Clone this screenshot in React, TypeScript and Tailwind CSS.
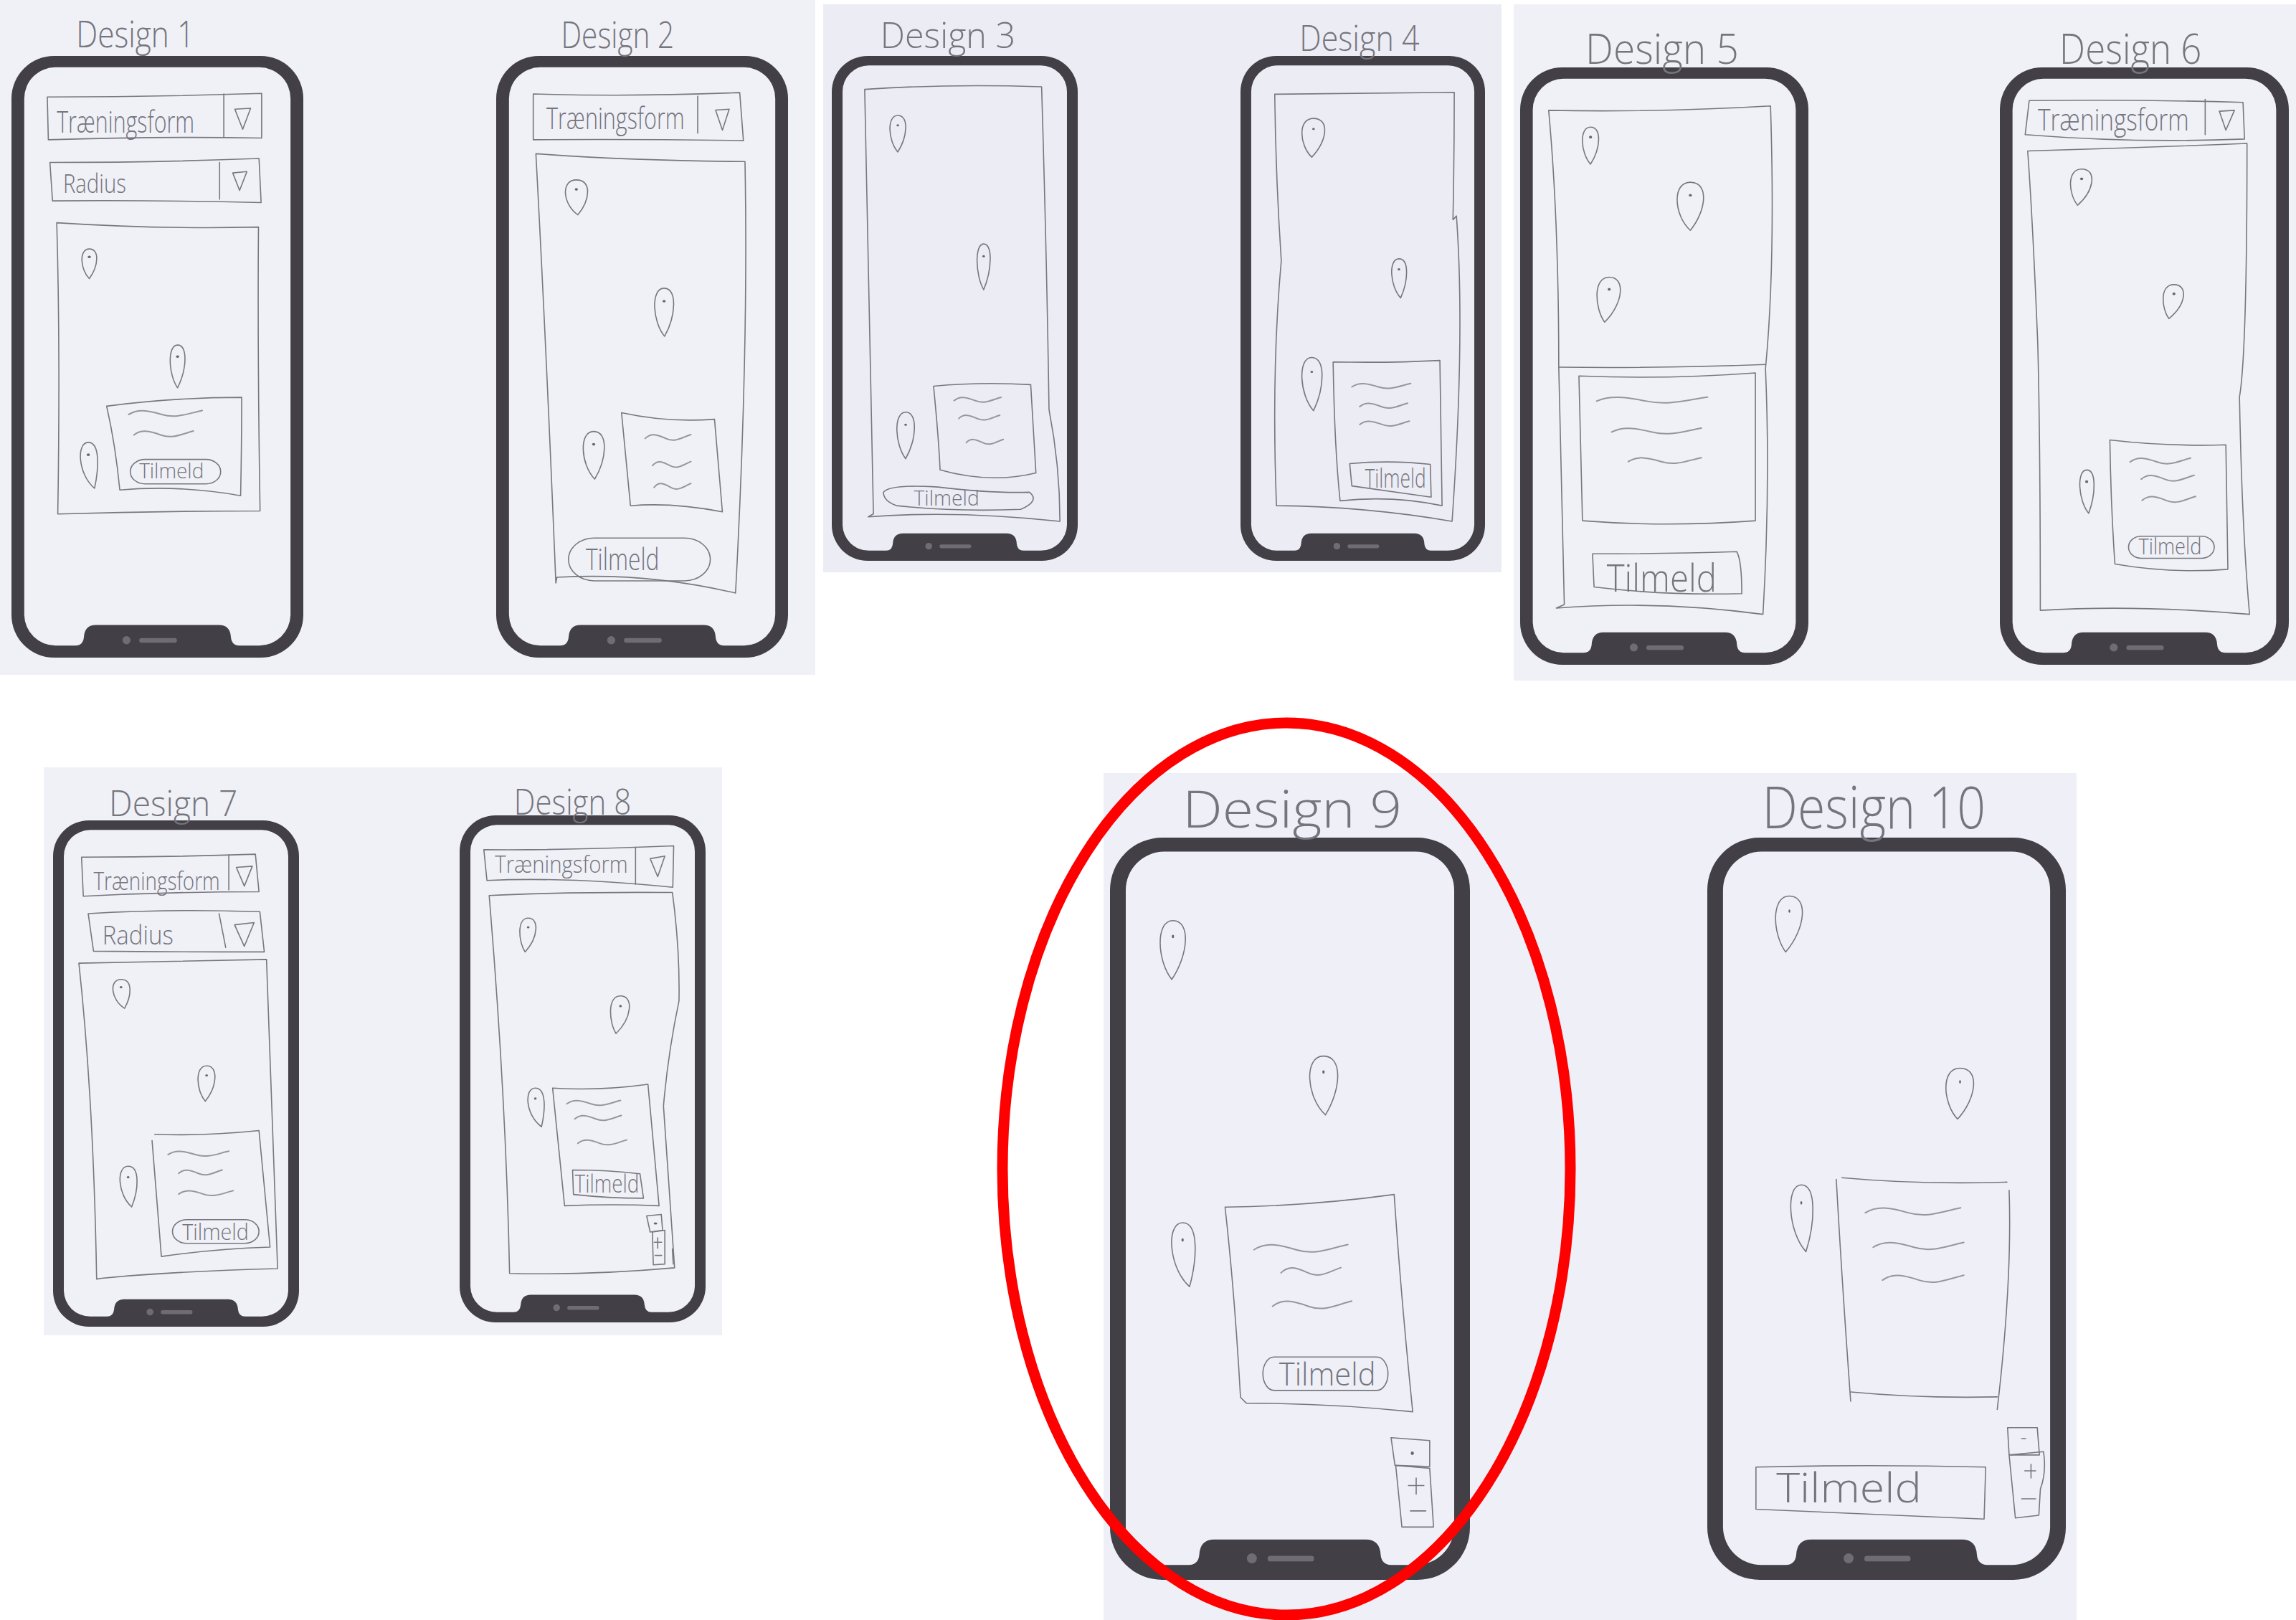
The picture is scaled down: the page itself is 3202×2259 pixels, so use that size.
import React from "react";

const Line = ({ d, light }: { d: string; light?: boolean }) => (
  <path
    d={d}
    fill="none"
    vectorEffect="non-scaling-stroke"
    strokeLinejoin="round"
    strokeLinecap="round"
    className={light ? "stroke-[#96969f] stroke-[2px]" : "stroke-[#77777f] stroke-[1.6px]"}
  />
);

const Wave = ({ x1, x2, y }: { x1: number; x2: number; y: number }) => {
  const w = x2 - x1;
  return (
    <Line
      light
      d={`M${x1} ${y + 4} C${x1 + w * 0.12} ${y - 9} ${x1 + w * 0.25} ${y - 6} ${x1 + w * 0.45} ${y + 4} S${x1 + w * 0.8} ${y + 2} ${x2} ${y - 5}`}
    />
  );
};

const Pin = ({ cx, t, b, w, tip }: { cx: number; t: number; b: number; w: number; tip?: number }) => {
  const h = b - t;
  const tx = tip ?? cx;
  return (
    <g>
      <Line
        d={`M${tx} ${b} C${cx - w * 0.62} ${b - h * 0.3} ${cx - w * 0.72} ${t} ${cx} ${t} C${cx + w * 0.72} ${t} ${cx + w * 0.62} ${b - h * 0.42} ${tx} ${b}`}
      />
      <ellipse cx={cx} cy={t + h * 0.27} rx={3} ry={3} className="fill-[#66666e]" />
    </g>
  );
};

const Pill = ({ x, y, w, h }: { x: number; y: number; w: number; h: number }) => (
  <rect
    x={x}
    y={y}
    width={w}
    height={h}
    rx={h / 2}
    ry={h / 2}
    fill="none"
    vectorEffect="non-scaling-stroke"
    className="stroke-[#77777f] stroke-[1.6px]"
  />
);

const Note = ({
  x,
  y,
  size,
  len,
  children,
}: {
  x: number;
  y: number;
  size: number;
  len: number;
  children: string;
}) => (
  <text
    x={x}
    y={y}
    fontSize={size}
    textLength={len}
    lengthAdjust="spacingAndGlyphs"
    className="fill-[#75757d] font-light font-['Open_Sans']"
  >
    {children}
  </text>
);

const Scan = ({ className, children }: { className: string; children: React.ReactNode }) => (
  <svg viewBox="0 0 1560 1560" preserveAspectRatio="none" className={`absolute ${className}`}>
    {children}
  </svg>
);

const Phone = ({ className }: { className: string }) => (
  <svg viewBox="0 0 411 847" preserveAspectRatio="none" className={`absolute ${className}`}>
    <path
      fillRule="evenodd"
      className="fill-[#423f47]"
      d="M60 0H351A60 60 0 0 1 411 60V787A60 60 0 0 1 351 847H60A60 60 0 0 1 0 787V60A60 60 0 0 1 60 0Z
         M62 16A44 44 0 0 0 18 60V787A44 44 0 0 0 62 830H90Q101 830 102 818Q103 801 119 801H292Q308 801 309 818Q310 830 321 830H349A44 44 0 0 0 393 787V60A44 44 0 0 0 349 16Z"
    />
    <circle cx="162" cy="822.5" r="5.7" className="fill-[#6f6c73]" />
    <rect x="180" y="819.5" width="53" height="6.5" rx="3" className="fill-[#6f6c73]" />
  </svg>
);

export default function App() {
  return (
    <div className="relative w-[3202px] h-[2259px] bg-white overflow-hidden">
      {/* paper sheets */}
      <div className="absolute left-[0px] top-[0px] w-[1137px] h-[941px] bg-[#f0f0f7]" />
      <div className="absolute left-[1148px] top-[6px] w-[946px] h-[792px] bg-[#ececf5]" />
      <div className="absolute left-[2111px] top-[6px] w-[1091px] h-[943px] bg-[#f0f0f7]" />
      <div className="absolute left-[61px] top-[1070px] w-[946px] h-[792px] bg-[#f0f0f7]" />
      <div className="absolute left-[1539px] top-[1078px] w-[1357px] h-[1181px] bg-[#efeff7]" />

      {/* phone frames */}
      <Phone className="left-[16px] top-[78px] w-[407px] h-[839px]" />
      <Phone className="left-[692px] top-[78px] w-[407px] h-[839px]" />
      <Phone className="left-[1160px] top-[78px] w-[343px] h-[704px]" />
      <Phone className="left-[1730px] top-[78px] w-[341px] h-[704px]" />
      <Phone className="left-[2120px] top-[94px] w-[402px] h-[833px]" />
      <Phone className="left-[2789px] top-[94px] w-[403px] h-[833px]" />
      <Phone className="left-[74px] top-[1144px] w-[343px] h-[706px]" />
      <Phone className="left-[641px] top-[1137px] w-[343px] h-[707px]" />
      <Phone className="left-[1548px] top-[1168px] w-[502px] h-[1035px]" />
      <Phone className="left-[2381px] top-[1168px] w-[500px] h-[1035px]" />

      {/* Design 1 and 2 */}
      <Scan className="left-[0px] top-[0px] w-[1143px] h-[950px]">
        <Note x={145} y={108} size={85} len={225}>Design 1</Note>
        <Note x={1068} y={110} size={85} len={215}>Design 2</Note>

        <Line d="M90 222Q290 222 498 214L498 316Q300 312 92 320Z" />
        <Line d="M426 215V315" />
        <Line d="M447 250L477 248L462 296Z" />
        <Note x={108} y={303} size={68} len={262}>Træningsform</Note>
        <Line d="M95 372Q300 372 493 363L497 464Q300 458 100 460Z" />
        <Line d="M418 372V456" />
        <Line d="M443 396L470 393L456 436Z" />
        <Note x={120} y={442} size={60} len={120}>Radius</Note>
        <Line d="M108 510Q300 525 492 520Q490 800 495 1170Q300 1170 110 1177Q115 800 108 510Z" />
        <Pin cx={170} t={570} b={638} w={28} />
        <Pin cx={338} t={790} b={888} w={28} />
        <Pin cx={168} t={1013} b={1118} w={32} tip={180} />
        <Line d="M203 930Q330 910 460 910Q460 1020 458 1135Q340 1110 228 1122Q220 1020 203 930Z" />
        <Wave x1={245} x2={385} y={945} />
        <Wave x1={255} x2={368} y={992} />
        <Pill x={248} y={1052} w={172} h={56} />
        <Note x={265} y={1096} size={48} len={123}>Tilmeld</Note>

        <Line d="M1015 215Q1200 222 1408 212L1415 322Q1200 318 1015 320Z" />
        <Line d="M1328 220V305" />
        <Line d="M1362 252L1388 250L1375 298Z" />
        <Note x={1040} y={296} size={68} len={263}>Træningsform</Note>
        <Line d="M1020 352Q1200 368 1418 370Q1425 800 1400 1358Q1230 1310 1060 1322L1058 1335Q1040 800 1020 352Z" />
        <Pin cx={1097} t={412} b={492} w={42} tip={1100} />
        <Pin cx={1264} t={660} b={770} w={36} tip={1265} />
        <Pin cx={1130} t={988} b={1097} w={40} tip={1132} />
        <Line d="M1183 945Q1270 968 1360 960L1375 1172Q1280 1150 1200 1158Z" />
        <Wave x1={1228} x2={1315} y={1000} />
        <Wave x1={1242} x2={1315} y={1062} />
        <Wave x1={1245} x2={1315} y={1112} />
        <Pill x={1082} y={1232} w={270} h={98} />
        <Note x={1115} y={1306} size={68} len={140}>Tilmeld</Note>
      </Scan>

      {/* Design 3 and 4 */}
      <Scan className="left-[1150px] top-[0px] w-[948px] h-[810px]">
        <Note x={128} y={130} size={95} len={310}>Design 3</Note>
        <Note x={1090} y={137} size={95} len={275}>Design 4</Note>

        <Line d="M92 240Q280 225 498 233Q510 700 515 1100Q540 1250 540 1400Q300 1370 100 1388L112 1380Q100 800 92 240Z" />
        <Pin cx={168} t={310} b={408} w={36} />
        <Pin cx={365} t={655} b={778} w={30} />
        <Pin cx={186} t={1107} b={1232} w={40} />
        <Line d="M250 1037Q360 1025 473 1033L485 1270Q380 1300 265 1262Q262 1180 250 1037Z" />
        <Wave x1={297} x2={405} y={1072} />
        <Wave x1={308} x2={402} y={1120} />
        <Wave x1={325} x2={410} y={1185} />
        <Line d="M135 1322Q150 1300 260 1308Q380 1325 470 1322Q495 1345 450 1368Q300 1375 165 1358Q135 1345 135 1322Z" />
        <Note x={205} y={1358} size={58} len={150}>Tilmeld</Note>

        <Line d="M1033 253Q1240 250 1445 248Q1445 420 1442 590L1450 580Q1470 900 1440 1400Q1240 1360 1037 1358Q1025 1000 1048 700Q1035 470 1033 253Z" />
        <Pin cx={1122} t={318} b={422} w={52} tip={1118} />
        <Pin cx={1318} t={695} b={800} w={34} tip={1322} />
        <Pin cx={1118} t={960} b={1103} w={46} tip={1122} />
        <Line d="M1167 972Q1300 975 1412 968L1417 1358Q1300 1330 1183 1345Q1170 1200 1167 972Z" />
        <Wave x1={1210} x2={1345} y={1035} />
        <Wave x1={1228} x2={1338} y={1088} />
        <Wave x1={1228} x2={1342} y={1136} />
        <Line d="M1205 1245Q1300 1235 1390 1247L1392 1335Q1300 1320 1210 1305Z" />
        <Note x={1240} y={1310} size={72} len={140}>Tilmeld</Note>
      </Scan>

      {/* Design 5 and 6 */}
      <Scan className="left-[2100px] top-[0px] w-[1097px] h-[960px]">
        <Note x={158} y={145} size={95} len={304}>Design 5</Note>
        <Note x={1098} y={145} size={95} len={282}>Design 6</Note>

        <Line d="M85 250Q300 255 525 240Q535 600 515 835Q525 1100 510 1392Q300 1360 100 1378L116 1370Q110 1100 105 830Q105 500 85 250Z" />
        <Line d="M105 832Q300 835 515 826" />
        <Pin cx={168} t={288} b={372} w={32} />
        <Pin cx={366} t={413} b={522} w={52} />
        <Pin cx={205} t={628} b={730} w={46} tip={196} />
        <Line d="M145 852Q320 860 495 845L495 1180Q320 1195 152 1180Z" />
        <Wave x1={180} x2={400} y={905} />
        <Wave x1={210} x2={388} y={975} />
        <Wave x1={243} x2={388} y={1042} />
        <Line d="M172 1255Q320 1255 458 1250Q468 1270 468 1345Q320 1350 175 1330Z" />
        <Note x={200} y={1340} size={88} len={218}>Tilmeld</Note>

        <Line d="M1038 228Q1250 225 1462 232L1465 315Q1250 325 1030 305Z" />
        <Line d="M1387 225V305" />
        <Line d="M1415 252L1445 250L1428 295Z" />
        <Note x={1055} y={296} size={68} len={300}>Træningsform</Note>
        <Line d="M1035 342Q1250 335 1470 325Q1470 800 1455 900Q1460 1200 1475 1392Q1250 1370 1060 1383Q1060 1000 1055 780Q1045 500 1035 342Z" />
        <Pin cx={1142} t={383} b={465} w={42} tip={1134} />
        <Pin cx={1325} t={645} b={722} w={40} tip={1315} />
        <Pin cx={1152} t={1065} b={1163} w={28} tip={1156} />
        <Line d="M1198 997Q1310 1012 1428 1008L1432 1290Q1320 1300 1208 1278Q1200 1150 1198 997Z" />
        <Wave x1={1238} x2={1358} y={1043} />
        <Wave x1={1260} x2={1365} y={1082} />
        <Wave x1={1262} x2={1368} y={1130} />
        <Pill x={1235} y={1215} w={170} h={50} />
        <Note x={1255} y={1256} size={50} len={125}>Tilmeld</Note>
      </Scan>

      {/* Design 7 and 8 */}
      <Scan className="left-[50px] top-[1060px] w-[965px] h-[818px]">
        <Note x={165} y={148} size={95} len={290}>Design 7</Note>
        <Note x={1078} y={145} size={95} len={264}>Design 8</Note>

        <Line d="M103 258Q300 258 495 250L503 350Q300 350 107 362Z" />
        <Line d="M435 252V345" />
        <Line d="M452 285L488 282L470 335Z" />
        <Note x={130} y={345} size={68} len={285}>Træningsform</Note>
        <Line d="M118 408Q300 395 505 403L515 510Q300 510 130 508Z" />
        <Line d="M413 408L428 498" />
        <Line d="M448 438L492 432L470 495Z" />
        <Note x={150} y={490} size={70} len={160}>Radius</Note>
        <Line d="M97 540Q300 535 520 530Q530 900 545 1352Q300 1360 148 1378L137 1380Q130 900 97 540Z" />
        <Pin cx={192} t={583} b={660} w={38} tip={200} />
        <Pin cx={385} t={813} b={907} w={38} tip={382} />
        <Pin cx={208} t={1080} b={1188} w={38} tip={216} />
        <Line d="M268 995Q380 1000 503 985L528 1295Q400 1300 283 1320L262 1012" />
        <Wave x1={298} x2={435} y={1045} />
        <Wave x1={322} x2={420} y={1095} />
        <Wave x1={322} x2={445} y={1150} />
        <Pill x={308} y={1222} w={195} h={63} />
        <Note x={330} y={1276} size={60} len={150}>Tilmeld</Note>

        <Line d="M1010 238Q1200 240 1438 228L1436 338Q1200 310 1017 320Z" />
        <Line d="M1352 232V330" />
        <Line d="M1385 262L1418 255L1402 310Z" />
        <Note x={1035} y={300} size={62} len={300}>Træningsform</Note>
        <Line d="M1022 360Q1200 350 1435 352Q1452 500 1450 640Q1425 780 1415 920Q1425 1100 1440 1350Q1250 1370 1068 1365Q1060 900 1022 360Z" />
        <Pin cx={1110} t={420} b={510} w={36} tip={1103} />
        <Pin cx={1318} t={627} b={727} w={42} tip={1308} />
        <Pin cx={1126} t={872} b={975} w={36} tip={1140} />
        <Line d="M1165 872Q1270 880 1380 862L1405 1185Q1300 1180 1192 1185Z" />
        <Wave x1={1197} x2={1318} y={910} />
        <Wave x1={1215} x2={1320} y={950} />
        <Wave x1={1222} x2={1332} y={1015} />
        <Line d="M1210 1090Q1290 1090 1362 1100L1370 1165Q1290 1165 1212 1155Z" />
        <Note x={1215} y={1150} size={68} len={145}>Tilmeld</Note>
        <Line d="M1377 1212L1410 1208L1413 1250L1385 1255Z" />
        <ellipse cx={1397} cy={1232} rx={4} ry={3} className="fill-[#66666e]" />
        <Line d="M1390 1255L1418 1250V1340L1392 1342Z" />
        <Line d="M1402 1270V1298M1394 1282H1411" />
        <Line d="M1396 1317H1411" />
        <Line d="M1435 1300L1437 1340" />
      </Scan>

      {/* Design 9 */}
      <Scan className="left-[1380px] top-[1000px] w-[840px] h-[1254px]">
        <Note x={500} y={192} size={90} len={568}>Design 9</Note>
        <Pin cx={475} t={353} b={455} w={65} tip={472} />
        <Pin cx={865} t={588} b={690} w={72} tip={870} />
        <Pin cx={500} t={877} b={988} w={60} tip={518} />
        <Line d="M610 850Q830 848 1048 828Q1065 1000 1096 1205Q880 1190 665 1190L650 1180Q635 1000 610 850Z" />
        <Wave x1={685} x2={928} y={920} />
        <Wave x1={755} x2={910} y={960} />
        <Wave x1={733} x2={938} y={1018} />
        <Pill x={708} y={1110} w={324} h={58} />
        <Note x={750} y={1160} size={55} len={250}>Tilmeld</Note>
        <Line d="M1040 1250L1140 1255V1300L1050 1298Z" />
        <ellipse cx={1095} cy={1277} rx={4} ry={3} className="fill-[#66666e]" />
        <Line d="M1052 1298L1140 1303L1150 1405L1068 1405Z" />
        <Line d="M1105 1320V1348M1085 1333H1125" />
        <Line d="M1090 1377H1130" />
      </Scan>

      {/* Design 10 */}
      <Scan className="left-[2220px] top-[1060px] w-[680px] h-[1192px]">
        <Note x={545} y={124} size={105} len={715}>Design 10</Note>
        <Pin cx={632} t={248} b={350} w={85} tip={620} />
        <Pin cx={1178} t={562} b={655} w={88} tip={1170} />
        <Pin cx={670} t={775} b={897} w={70} tip={685} />
        <Line d="M782 765Q800 950 828 1170" />
        <Line d="M800 762Q1050 775 1328 770" />
        <Line d="M1335 785Q1345 950 1297 1185" />
        <Line d="M828 1153Q1050 1165 1297 1162" />
        <Wave x1={875} x2={1180} y={822} />
        <Wave x1={900} x2={1190} y={885} />
        <Wave x1={930} x2={1190} y={945} />
        <Line d="M525 1290Q880 1285 1260 1290L1255 1385Q880 1375 525 1367Z" />
        <Note x={590} y={1355} size={75} len={465}>Tilmeld</Note>
        <Line d="M1330 1218L1425 1218L1432 1268L1335 1268Z" />
        <Line d="M1375 1238H1388" />
        <Line d="M1335 1268L1445 1262Q1455 1300 1435 1330L1430 1378L1355 1383Z" />
        <Line d="M1405 1285V1310M1385 1297H1420" />
        <Line d="M1375 1348H1420" />
      </Scan>

      {/* red marker around the chosen design */}
      <svg viewBox="0 0 3202 2259" className="absolute inset-0 w-[3202px] h-[2259px] pointer-events-none">
        <ellipse cx="1794" cy="1630" rx="396" ry="622" fill="none" className="stroke-[#fe0000] stroke-[15px]" />
      </svg>
    </div>
  );
}
